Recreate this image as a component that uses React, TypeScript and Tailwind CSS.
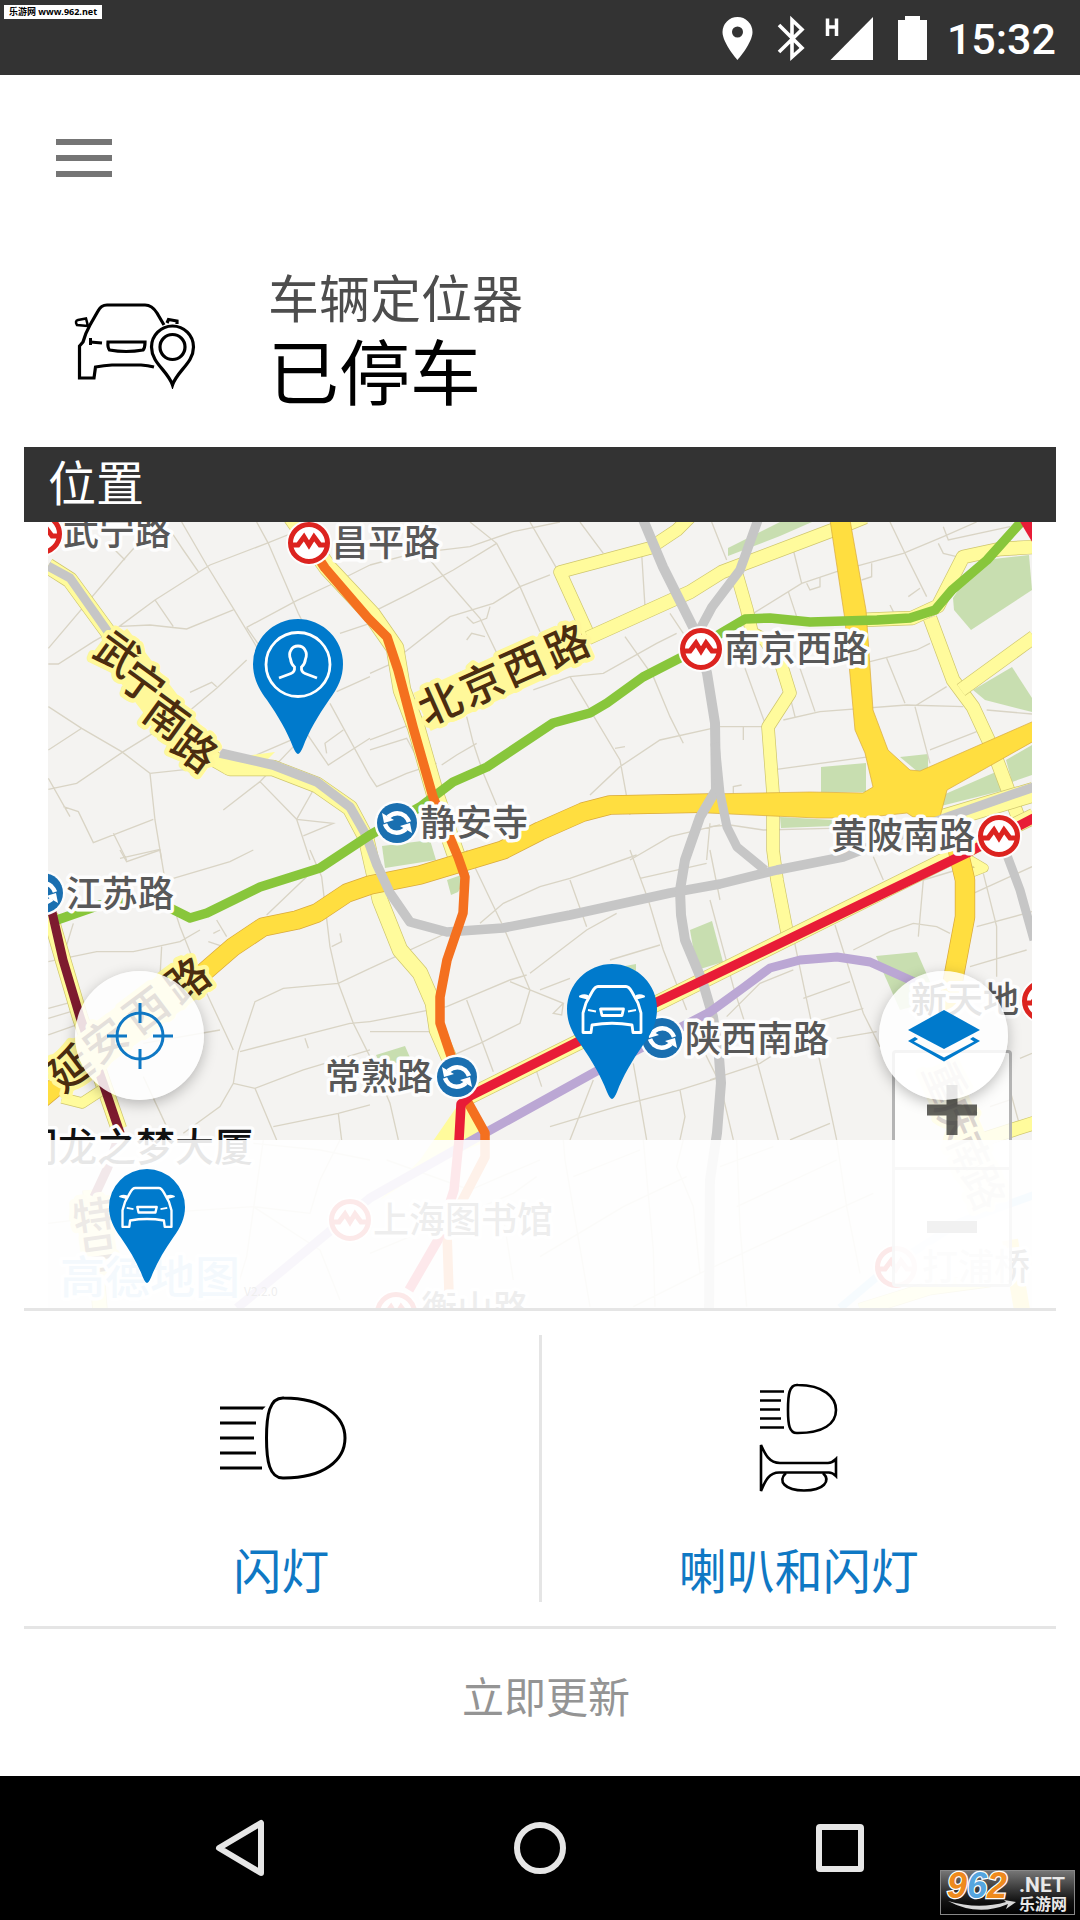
import React from "react";

const CJK = "font-['Noto_Sans_CJK_SC',sans-serif]";

type Pt = string;

/* ---------- icons ---------- */

function CarLocatorIcon() {
  return (
    <svg viewBox="74 302 122 86" className="h-[86px] w-[122px]" fill="none" stroke="#000" strokeWidth="3.200" aria-hidden="true">
      <path d="M164 324 157 312Q152 304 145 304H107Q101 304 98 310L90 324Q85 333 83 341L79.500 345V377H94L95.500 366Q104 364.500 112 364H141Q148 364.500 154 366" />
      <path d="M88 325 77 324Q74.500 320 78 319L86 317.500Z" strokeWidth="2.500" />
      <path d="M167 322 168.500 318.500 177 320V323" />
      <path d="M90.500 337V344" strokeWidth="3" />
      <path d="M90 341 102 342" />
      <path d="M108 341H145Q145 347 143 349Q126 352 109.500 349Q107.500 347 108 341Z" />
      <path d="M172.500 384C168 370 151.500 362 151.500 346A21 21 0 0 1 193.500 346C193.500 362 177 370 172.500 384Z" />
      <circle cx="172.500" cy="346" r="12.500" />
    </svg>
  );
}

function CarGlyph() {
  return (
    <g fill="none" stroke="#fff" strokeWidth="2.800" strokeLinejoin="round">
      <path d="M16 68.500V49L19 39 25 28Q28 22.500 31 22.500H59Q62 22.500 65 28L71 39 74 49V68.500H66L65 61Q45 57.500 25 61L24 68.500Z" />
      <path d="M33.500 45H56.500L55 51.500H35Z" />
      <path d="M21 46 29 47.500M69 46 61 47.500" strokeWidth="2" />
      <path d="M13 32.500Q17 30.500 20.500 32V34.500ZM77 32.500Q73 30.500 69.500 32V34.500Z" fill="#fff" strokeWidth="2" />
    </g>
  );
}

function PersonGlyph() {
  return (
    <g fill="none" stroke="#fff" strokeWidth="2.800">
      <circle cx="45" cy="45.500" r="32" />
      <path d="M26 59 38 54.500Q42 53 41.500 48Q38 45 37.500 40Q35.500 35 38 31Q40 27 45 27Q50 27 52 31Q54.500 35 52.500 40Q52 45 48.500 48Q48 53 52 54.500L64 59" />
    </g>
  );
}

function Pin({ className, kind }: { className: string; kind: "car" | "person" }) {
  return (
    <svg viewBox="0 0 90 135" className={className} role="img" aria-label={kind === "car" ? "车辆" : "我的位置"}>
      <path
        fill="#007acc"
        d="M0 45A45 45 0 0 1 90 45C90 58 85 69 76 81C65 97 56 112 50 128Q47 135 45 135Q43 135 40 128C34 112 25 97 14 81C5 69 0 58 0 45Z"
      />
      {kind === "car" ? <CarGlyph /> : <PersonGlyph />}
    </svg>
  );
}

function LampIcon() {
  return (
    <svg viewBox="220 1395 128 86" className="h-[86px] w-[128px]" fill="none" stroke="#000" strokeWidth="3" aria-hidden="true">
      <path d="M285 1398C325 1398 346 1417 346 1438C346 1460 325 1478 285 1478C270 1479 267.500 1460 267.500 1438C267.500 1416 270 1397 285 1398Z" />
      <path d="M221 1408H263L262 1409M221 1423H257M221 1438H255M221 1453H257M221 1468H263" />
    </svg>
  );
}

function HornIcon() {
  return (
    <svg viewBox="758 1383 80 112" className="h-[112px] w-[80px]" fill="none" stroke="#000" strokeWidth="2.600" aria-hidden="true">
      <path d="M798 1386C823 1386 836 1398 836 1411C836 1425 823 1434 798 1434C789 1435 788 1425 788 1411C788 1396 789 1385 798 1386Z" />
      <path d="M760 1392.500H784M760 1401.500H781M760 1410.500H780M760 1419.500H781M760 1428.500H784" />
      <path d="M761 1446V1492C765 1482 769 1473 780 1473.500H828Q832 1473 836 1477V1460Q832 1464 828 1464H780C769 1464 765 1455 761 1446Z" />
      <path d="M786 1474C777 1482 785 1491.500 804 1491.500C824 1491.500 831 1482 823 1474" />
    </svg>
  );
}

/* ---------- map ---------- */

const WHITE_HALO = { stroke: "#fdfdfd", strokeWidth: 7, paintOrder: "stroke", strokeLinejoin: "round" } as const;
const YELLOW_HALO = { stroke: "#fff89a", strokeWidth: 9, paintOrder: "stroke", strokeLinejoin: "round" } as const;

/* Cased road: outline, fill */
function Road({ pts, w, fill = "#fffb9c", edge = "#cfc66e" }: { pts: Pt; w: number; fill?: string; edge?: string }) {
  return (
    <g fill="none" strokeLinejoin="round">
      <polyline points={pts} stroke={edge} strokeWidth={w + 1.4} />
      <polyline points={pts} stroke={fill} strokeWidth={w} />
    </g>
  );
}

function Line({ pts, c, w = 9.5 }: { pts: Pt; c: string; w?: number }) {
  return <polyline points={pts} fill="none" stroke={c} strokeWidth={w} strokeLinejoin="round" />;
}

function Metro({ x, y }: { x: number; y: number }) {
  return (
    <g transform={`translate(${x} ${y})`}>
      <circle r="23" fill="#fdfdfd" />
      <circle r="18.500" fill="#fff" stroke="#dc231f" strokeWidth="5" />
      <path d="M-18 2H-11L-5 -6 0 2 5 -6 11 2H18" fill="none" stroke="#dc231f" strokeWidth="5" />
    </g>
  );
}

function Interchange({ x, y }: { x: number; y: number }) {
  return (
    <g transform={`translate(${x} ${y})`}>
      <circle r="22.500" fill="#fdfdfd" />
      <circle r="20" fill="#1a6fb0" />
      <path d="M-9 -6Q0 -13 8 -7Q11 -4 12 -1M9 6Q0 13 -8 7Q-11 4 -12 1" fill="none" stroke="#fff" strokeWidth="4.500" />
      <path d="M-15 -10 -13 0 -3 -3ZM15 10 13 0 3 3Z" fill="#fff" />
    </g>
  );
}

const STREETS: { x: number; y: number; d: string }[] = [
  {
    x: 20,
    y: 510,
    d: "M485 36 560 165 640 295 740 460M535 185 490 120 450 60M710 36 745 100 835 310 850 340M85 415 310 150 390 60M85 462H115L220 395 290 355 405 270 570 165 740 100 840 60M285 350 390 345 500 357 640 300M405 270 460 350M260 95 315 150M680 352 830 272 930 225 1050 165M680 352 720 410M510 547 575 517 590 530M505 605 590 535 680 450M960 370 1050 340M950 545 1050 500M85 590 185 655 305 725 390 790 530 775M85 720 185 655M85 838 170 820 310 725 480 620M85 805 150 920M130 890 175 905 220 998 400 928M390 790 405 930 425 1050M280 970 320 1050M300 1045 420 1018M610 900 720 815 820 710M720 815 830 928 940 940 850 978M830 928 880 840M830 928 870 1050M710 735 860 670 925 765 1050 685M930 580 1050 800M970 660 915 700 920 730",
  },
  {
    x: 370,
    y: 510,
    d: "M300 36 380 100 450 230 510 365M0 165 130 130 300 110 430 65 570 36M480 36 560 175M0 310 120 250 250 180 380 100M180 150 230 210 330 325 400 470M540 195 450 230 370 280 240 320 100 430M290 320 310 340 350 325 360 290M630 36 700 130M290 390 305 370 345 380M0 490 100 445M0 690 130 640M0 720 110 685 150 760M290 620 310 700 340 790 380 885M215 765 260 735 320 700M490 540 600 500 700 490 860 400 920 370M600 500 750 750 780 915M660 855 750 770 870 690 1050 650M765 380 850 500 900 620 940 700M735 715 765 710M815 130 825 290M900 310 940 370M0 800 20 830 110 790 200 760M780 1050 900 980 1050 945M1020 940 1010 1050",
  },
  {
    x: 710,
    y: 510,
    d: "M5 36 50 150M250 120 275 220 130 310M275 220 380 185 580 130 700 80 800 36M290 220 300 240 330 230 330 200M235 245 260 320M485 160V200L455 210M540 36 585 130 650 260M595 260 630 235M685 100 700 130 740 140M700 50 715 90 900 50M480 455 620 420 660 400M530 445 585 580M270 475 315 605M105 475 165 640M30 650H160M220 630 330 605 590 585 760 590M620 585 710 530M615 590 660 760M660 720 800 665M200 778 480 740M830 600 966 612M100 650V690M0 950 60 945 160 960 360 955M240 560 255 620M540 285 550 305M70 850V830L95 825",
  },
  {
    x: 20,
    y: 850,
    d: "M300 0 320 35 420 0 435 90 480 230 560 430 640 600M460 85 630 35 700 0M85 335 230 305H340L480 275 540 240M425 290 420 380M870 0 905 80 930 290 955 400 1000 520 1050 620M740 195 860 80M590 210 620 260M580 250 600 240M565 275 610 290M935 290 965 275 960 250M85 475 160 455M85 505 170 480M85 555 170 525M660 605 990 520 1050 515M655 605 705 455 790 415 955 400 1050 355M655 605 640 700 600 770 490 850M640 700 705 715 850 660 1050 600M705 715 770 870M760 830 955 790 1050 765M955 790 965 870M370 680 440 830M370 580 600 540M855 565 865 595M160 220 140 285",
  },
  {
    x: 370,
    y: 850,
    d: "M290 0 400 230 480 420 450 520 330 580 240 620M330 220 400 160 510 110 600 85 800 15M600 90 650 230M0 355 250 240M480 370 650 240 740 190M0 515 230 470 420 390 470 375M420 395 480 420 580 460 550 490 575 495 580 460M290 450 370 665M510 420 600 385M720 330 870 285M780 0 835 150 880 300 950 480M810 85 1010 40M1020 0 1050 150M500 665 515 710M670 690 600 870M540 830 740 770 930 720 1040 685M790 640 830 870M930 720 945 800 930 870M0 620 60 760 85 870M0 545 190 545M1000 600 1040 680",
  },
  {
    x: 710,
    y: 850,
    d: "M0 150 70 410 140 630 205 870M375 225 460 490 510 590M250 260 290 450 380 870M430 300 540 245 610 220 680 230 720 250M640 90 625 260M640 90 740 60M490 20 520 90M820 70 860 230V380M790 130 966 50M800 230 966 185M780 350 950 300M280 445 420 395M300 520 460 475M380 565 500 545M50 500 150 400 250 360M0 690 150 640 230 590M240 870 360 820M30 700 70 870M900 720 930 830M930 625 966 610M840 770 900 750",
  },
  {
    x: 20,
    y: 1140,
    d: "M730 0 680 350 640 480M960 0 900 120 870 220 700 200 250 230 85 250M1050 60 900 30 700 10M900 330 960 480M700 200 900 330M1050 340 1480 160 1550 110M1450 230 1480 420M1100 60 1350 150 1560 60",
  },
  {
    x: 540,
    y: 1140,
    d: "M70 0 75 60 150 500M310 0 340 330 345 500M430 0 410 80 460 200 480 400M590 0 600 260 620 500M890 0 920 200 960 400M0 350 250 200 440 110M100 110 300 30M280 500 480 400 800 250 1000 160M540 80 700 20M590 200 890 60",
  },
];

const LABELS: { t: string; x: number; y: number }[] = [
  { t: "武宁路", x: 63, y: 545 },
  { t: "昌平路", x: 332, y: 556 },
  { t: "南京西路", x: 724, y: 662 },
  { t: "静安寺", x: 420, y: 836 },
  { t: "黄陂南路", x: 831, y: 849 },
  { t: "江苏路", x: 66, y: 907 },
  { t: "常熟路", x: 325, y: 1090 },
  { t: "陕西南路", x: 685, y: 1052 },
  { t: "新天地", x: 911, y: 1013 },
  { t: "上海图书馆", x: 373, y: 1233 },
  { t: "衡山路", x: 421, y: 1322 },
  { t: "打浦桥", x: 922, y: 1280 },
];

const ROAD_CHARS: { t: string; x: number; y: number; a: number }[] = [
  { t: "武", x: 118, y: 654, a: 36 },
  { t: "宁", x: 143, y: 683, a: 36 },
  { t: "南", x: 167, y: 717, a: 36 },
  { t: "路", x: 195, y: 749, a: 36 },
  { t: "北", x: 440, y: 703, a: -24 },
  { t: "京", x: 482, y: 684, a: -24 },
  { t: "西", x: 523, y: 664, a: -24 },
  { t: "路", x: 567, y: 646, a: -24 },
  { t: "延", x: 70, y: 1068, a: -37 },
  { t: "安", x: 105, y: 1040, a: -37 },
  { t: "西", x: 146, y: 1010, a: -37 },
  { t: "路", x: 187, y: 980, a: -37 },
  { t: "重", x: 945, y: 1083, a: 66 },
  { t: "庆", x: 958, y: 1120, a: 66 },
  { t: "南", x: 970, y: 1155, a: 66 },
  { t: "路", x: 984, y: 1188, a: 66 },
  { t: "特", x: 94, y: 1218, a: -8 },
  { t: "吕", x: 99, y: 1254, a: -8 },
];

function CityMap() {
  return (
    <svg
      viewBox="48 522 984 786"
      preserveAspectRatio="xMidYMid slice"
      className={`block h-full w-full ${CJK}`}
      role="img"
      aria-label="地图"
    >
      <rect x="-1000" y="522" width="3000" height="900" fill="#f4f3f1" />

      {/* parks */}
      <g fill="#c8deb0">
        <path d="M780 522H812L780 536 728 556V548Z" />
        <path d="M953 598 963 583 993 559 1029 555 1032 590 971 630 954 610Z" />
        <path d="M973 690 1012 667 1032 698V712L985 700Z" />
        <path d="M821 767 866 763V792H821Z" />
        <path d="M900 757 928 754V775L918 772Z" />
        <path d="M780 817 833 820V826L781 828Z" />
        <path d="M943 795 998 771 1005 790 941 806Z" />
        <path d="M1006 760 1032 745V775L1012 782Z" />
        <path d="M382 846 430 840 436 860 385 868Z" />
        <path d="M447 880 470 872 458 892 451 895Z" />
        <path d="M690 930 712 921 723 962 697 970Z" />
        <path d="M876 956 917 952 938 1000 900 1010Z" />
        <path d="M376 1055 405 1046 412 1062 380 1064Z" />
        <path d="M625 966 636 964V975Z" />
      </g>

      {/* minor streets */}
      <g fill="none" stroke="#d9d4c5">
        {STREETS.map((s, i) => (
          <path key={i} d={s.d} strokeWidth="4" transform={`translate(${s.x} ${s.y}) scale(0.3333)`} />
        ))}
      </g>

      {/* secondary roads */}
      <Road pts="690,517 677,530 650,548 560,572 590,638" w={12} />
      <Road pts="588,638 690,592 722,572 833,530 865,517" w={13} />
      <Road pts="737,575 747,610 752,633 765,640 782,667 790,693 768,727 773,793 773,850 777,880 787,932" w={12} />
      <Road pts="1034,547 1000,549 963,557 938,606 912,618 860,620" w={13} />
      <Road pts="930,618 953,680 973,707 993,750 1020,822" w={13} />
      <Road pts="961,690 1034,637" w={13} />
      <Road pts="940,820 1034,792" w={19} />
      <Road pts="962,855 984,868 974,872 960,872" w={8} />
      <Road pts="48,566 70,580 108,632 150,690 190,745 230,768 273,768 317,785 350,808 366,838 380,900 400,950 420,973 433,1003 437,1030 450,1060" w={15} />
      <path d="M215 760 275 752 255 772 225 774Z" fill="#fffb9c" />
      <Road pts="292,517 328,568 372,615 395,648 402,690 416,727 436,797 456,855" w={17} />
      <Road pts="50,915 63,960 80,1017 103,1083 119,1129" w={15} />
      <Road pts="62,1098 82,1103 105,1088" w={10} />
      <Road pts="462,1100 720,972 1034,816" w={15} />
      <path d="M460 1102 420 1160 380 1200 440 1160 490 1140 470 1100Z" fill="#fffb9c" />
      <Road pts="950,1150 1034,1123" w={13} />
      <Road pts="860,1310 930,1288 990,1280" w={13} />
      <Road pts="90,1190 100,1310" w={14} />

      {/* elevated roads */}
      <Road pts="40,1100 70,1075 203,973 233,947 263,927 297,920 317,913 347,893 370,885 420,875 503,850 540,831 583,812 610,805 712,803" w={18} fill="#ffde40" edge="#d9a93c" />
      <path
        d="M830 520H850L866 610 873 710 888 750 910 770 920 771 1034 721V741L947 790 940 817H913L907 813 860 818H817L708 813V794L810 792 863 793 873 787 865 753 855 730 845 620Z"
        fill="#ffde40"
        stroke="#d9a93c"
        strokeWidth="0.700"
      />
      <Road pts="958,850 965,880 965,917 954,975 948,1010" w={19} fill="#ffde40" edge="#d9a93c" />
      <Line pts="1010,1240 1022,1310" c="#ffde40" w={16} />
      <Line pts="840,1308 885,1270 960,1222 1034,1195" c="#a9d7f5" w={8} />

      {/* railway and metro lines */}
      <Line c="#c6c6c6" pts="48,566 70,578 108,632 150,690" w={9} />
      <Line c="#c6c6c6" pts="220,753 273,765 317,782 350,807 366,835 377,865 390,893 410,922 447,932 503,928 570,915 670,893 720,884 777,870 843,857 948,817 1034,787" />
      <Line c="#c6c6c6" pts="642,517 663,567 693,627 707,673 715,723 716,790 700,817 685,860 680,890 681,915 685,940 703,983 713,1017 719,1057 721,1083 717,1133 710,1180 709,1310" w={10} />
      <Line c="#c6c6c6" pts="759,517 740,570 712,607 697,635" />
      <Line c="#c6c6c6" pts="715,743 720,793 727,827 737,847 765,870" w={9} />
      <Line c="#c6c6c6" pts="1005,850 1020,890 1034,940" w={9} />
      <Line c="#bba7d4" pts="930,990 910,980 870,962 837,957 800,960 770,968 743,988 710,1012 595,1072 485,1133 370,1198 237,1308" w={9} />
      <Line c="#88c63b" pts="57,920 100,905 150,900 170,908 190,918 207,913 260,887 320,868 370,835 420,807 453,782 487,767 553,723 590,713 607,703 643,677 680,658 723,632 745,619 770,618 810,622 877,620 910,618 935,610 952,590 987,560 1022,521" />
      <Line c="#f4701f" pts="309,544 325,568 368,618 387,637 398,670 413,727 433,797 458,857 465,877 463,913 447,960 440,997 440,1023 450,1053 465,1097 485,1133 485,1157 461,1203 447,1233 449,1293" />
      <Line c="#e81c37" pts="1034,818 967,853 710,977 657,1002 470,1096 461,1104 459,1140 454,1190 438,1240 409,1290" />
      <Line c="#7d1b2f" pts="52,912 63,960 80,1017 103,1083 120,1133 108,1167 94,1197" w={9} />
      <path d="M1019 520H1034V545Z" fill="#e81c37" />

      {/* station names */}
      <g fontSize="36" fontWeight="500" fill="#585858" {...WHITE_HALO}>
        {LABELS.map((l) => (
          <text key={l.t} x={l.x} y={l.y}>
            {l.t}
          </text>
        ))}
      </g>
      <text x="19" y="1161" fontSize="39" fontWeight="500" fill="#111" {...WHITE_HALO}>
        门龙之梦大厦
      </text>

      {/* road names on their yellow bands */}
      <Line c="#fff89a" pts="112,640 200,756" w={38} />
      <Line c="#fff89a" pts="422,712 582,639" w={42} />
      <Line c="#fff89a" pts="56,1078 200,970" w={42} />
      <g fontSize="43" fontWeight="500" fill="#4b2d10" textAnchor="middle">
        {ROAD_CHARS.map((c, i) => (
          <text key={i} transform={`translate(${c.x} ${c.y}) rotate(${c.a})`} y="16" {...YELLOW_HALO}>
            {c.t}
          </text>
        ))}
      </g>

      {[
        [41, 534],
        [309, 543],
        [701, 649],
        [999, 836],
        [1043, 1001],
        [350, 1220],
        [396, 1313],
        [896, 1267],
      ].map(([x, y]) => (
        <Metro key={`${x}-${y}`} x={x} y={y} />
      ))}
      {[
        [397, 823],
        [43, 893],
        [457, 1077],
        [662, 1038],
      ].map(([x, y]) => (
        <Interchange key={`${x}-${y}`} x={x} y={y} />
      ))}

      <text x="60" y="1294" fontSize="45" fontWeight="500" fill="#8cc6ee" {...WHITE_HALO}>
        高德地图
      </text>
      <text x="244" y="1296" fontSize="12" fill="#555">
        V2.2.0
      </text>
    </svg>
  );
}

function MapPanel() {
  return (
    <div className="relative mx-6 h-[786px] overflow-hidden">
      <CityMap />
      <Pin kind="person" className="absolute left-[205px] top-[97px] h-[135px] w-[90px]" />
      <Pin kind="car" className="absolute left-[519px] top-[442px] h-[135px] w-[90px]" />

      <div className="absolute right-[20px] top-[528px] flex w-[120px] flex-col rounded border-3 border-neutral-400/80 bg-white/80">
        <button aria-label="放大" className="flex h-[117px] items-center justify-center border-b-3 border-neutral-400/80">
          <svg viewBox="0 0 50 50" className="size-[50px]" aria-hidden="true">
            <path d="M0 25H50M25 0V50" stroke="#3c3c38" strokeOpacity="0.800" strokeWidth="11" />
          </svg>
        </button>
        <button aria-label="缩小" className="flex h-[114px] items-center justify-center">
          <svg viewBox="0 0 50 50" className="size-[50px]" aria-hidden="true">
            <path d="M0 25H50" stroke="#777777" strokeWidth="12" />
          </svg>
        </button>
      </div>

      <button
        aria-label="定位"
        className="absolute left-[27px] top-[449px] flex size-[129px] items-center justify-center rounded-full bg-white/85 shadow-[0_4px_14px_rgba(0,0,0,0.25)]"
      >
        <svg viewBox="0 0 66 66" className="size-[66px]" fill="none" stroke="#0f78c4" strokeWidth="3" aria-hidden="true">
          <circle cx="33" cy="33" r="23" />
          <path d="M33 0V20M33 46V66M0 33H20M46 33H66" />
        </svg>
      </button>
      <button
        aria-label="图层"
        className="absolute right-[24px] top-[449px] flex size-[129px] items-center justify-center rounded-full bg-white/85 shadow-[0_4px_14px_rgba(0,0,0,0.25)]"
      >
        <svg viewBox="0 0 72 52" className="h-[52px] w-[72px]" fill="#007acc" aria-hidden="true">
          <path d="M36 0 72 20 36 39 0 20Z" />
          <path d="M0 31 7 27 10 29 6 31.500 36 47.500 66 31.500 62 29 65 27 72 31 36 51.500Z" />
        </svg>
      </button>

      <div className="absolute inset-x-0 bottom-0 flex h-[168px] items-start bg-white/90 px-[61px] pt-[29px]">
        <Pin kind="car" className="h-[114px] w-[76px]" />
      </div>
    </div>
  );
}

/* ---------- page ---------- */

function StatusBar() {
  return (
    <div className="relative flex h-[75px] items-center justify-end bg-[#333333] pr-6 text-white">
      <span className="absolute left-1 top-[5px] flex h-[14px] w-[98px] items-center justify-center whitespace-pre bg-white font-['Open_Sans','Noto_Sans_CJK_SC',sans-serif] text-[9px] font-bold leading-[14px] text-black">
        乐游网 www.962.net
      </span>
      <svg viewBox="720 13 212 48" className="mr-4 h-[48px] w-[212px]" fill="#fff" aria-hidden="true">
        <path
          fillRule="evenodd"
          d="M738.500 16A15 15 0 0 0 723.500 31C723.500 42 738.500 59 738.500 59S753.500 42 753.500 31A15 15 0 0 0 738.500 16ZM738.500 25.500A5.500 5.500 0 1 1 738.500 36.500A5.500 5.500 0 0 1 738.500 25.500Z"
        />
        <path d="M780 24 803 47 793 56V19L803 28.500 780 51" fill="none" stroke="#fff" strokeWidth="3.600" />
        <path d="M874 16V59H831.500Z" />
        <path d="M906 15H921V19H928V59H899V19H906Z" />
        <path d="M828.500 17.500V35M837.500 17.500V35M828.500 26H837.500" fill="none" stroke="#fff" strokeWidth="3.500" />
      </svg>
      <time className="pt-1 font-['Roboto',sans-serif] text-[43px] font-medium leading-none">15:32</time>
    </div>
  );
}

function SiteBadge() {
  return (
    <svg viewBox="0 0 135 45" className="absolute bottom-[5px] right-[5px] h-[45px] w-[135px]" role="img" aria-label="962.NET 乐游网">
      <defs>
        <linearGradient id="badge" x1="0" y1="0" x2="0" y2="1">
          <stop offset="0" stopColor="#777" />
          <stop offset="0.700" stopColor="#111" />
          <stop offset="1" stopColor="#000" />
        </linearGradient>
      </defs>
      <rect x="0.500" y="0.500" width="134" height="44" fill="url(#badge)" stroke="#888" />
      <path d="M8 31Q38 47 68 34L66 39 76 32 64 30 66 32Q38 40 8 31Z" fill="#d8d8d8" />
      <text
        x="7"
        y="28"
        fontFamily="'Liberation Sans', sans-serif"
        fontSize="36"
        fontWeight="700"
        fontStyle="italic"
        stroke="#fff"
        strokeWidth="2.500"
        paintOrder="stroke"
      >
        <tspan fill="#ee8a1d">9</tspan>
        <tspan fill="#55a5de">6</tspan>
        <tspan fill="#ee8a1d">2</tspan>
      </text>
      <text x="79" y="22" fontSize="21" fontWeight="700" fontFamily="Roboto, sans-serif" fill="#e8e8e8">
        .NET
      </text>
      <text x="79" y="40" fontSize="16" fontWeight="700" fill="#e8e8e8" className={CJK}>
        乐游网
      </text>
    </svg>
  );
}

export default function App() {
  return (
    <div className={`flex min-h-screen flex-col bg-white ${CJK}`}>
      <StatusBar />

      <header className="px-14 pt-16">
        <button aria-label="菜单" className="flex w-14 flex-col gap-[10px]">
          <span className="h-[6px] w-full bg-[#757575]" />
          <span className="h-[6px] w-full bg-[#757575]" />
          <span className="h-[6px] w-full bg-[#757575]" />
        </button>
      </header>

      <main className="flex flex-1 flex-col px-6">
        <div className="mt-[84px] flex items-end gap-[72px] pl-[50px]">
          <div className="pb-4">
            <CarLocatorIcon />
          </div>
          <div>
            <p className="text-[51px] leading-[70px] text-[#4d4d4d]">车辆定位器</p>
            <h1 className="text-[71px] leading-[74px] text-black">已停车</h1>
          </div>
        </div>

        <h2 className="mt-[42px] h-[75px] bg-[#333333] px-6 text-[48px] leading-[66px] text-white">位置</h2>
        <MapPanel />

        <div className="flex border-y-3 border-[#e5e5e5] py-6">
          <button className="flex flex-1 flex-col items-center pb-[6px] text-[48px] leading-[56px] text-[#0f78c4]">
            <span className="flex h-[205px] items-center pl-1">
              <LampIcon />
            </span>
            闪灯
          </button>
          <span className="w-[3px] bg-[#e5e5e5]" />
          <button className="flex flex-1 flex-col items-center pb-[6px] text-[48px] leading-[56px] text-[#0f78c4]">
            <span className="flex h-[205px] items-center pr-[2px]">
              <HornIcon />
            </span>
            喇叭和闪灯
          </button>
        </div>

        <button className="flex-1 pb-4 pl-3 text-[42px] leading-[60px] text-[#949494]">立即更新</button>
      </main>

      <nav className="relative grid h-36 grid-cols-3 bg-black px-[90px]">
        <button aria-label="返回" className="flex items-center justify-center">
          <svg viewBox="0 0 56 60" className="h-[60px] w-[56px]" fill="none" stroke="#e6e6e6" strokeWidth="6" strokeLinejoin="round" aria-hidden="true">
            <path d="M49 5V55L7 30Z" />
          </svg>
        </button>
        <button aria-label="主页" className="flex items-center justify-center">
          <span className="size-[52px] rounded-full border-6 border-[#e6e6e6]" />
        </button>
        <button aria-label="最近任务" className="flex items-center justify-center">
          <span className="size-[48px] rounded border-6 border-[#e6e6e6]" />
        </button>
        <SiteBadge />
      </nav>
    </div>
  );
}
